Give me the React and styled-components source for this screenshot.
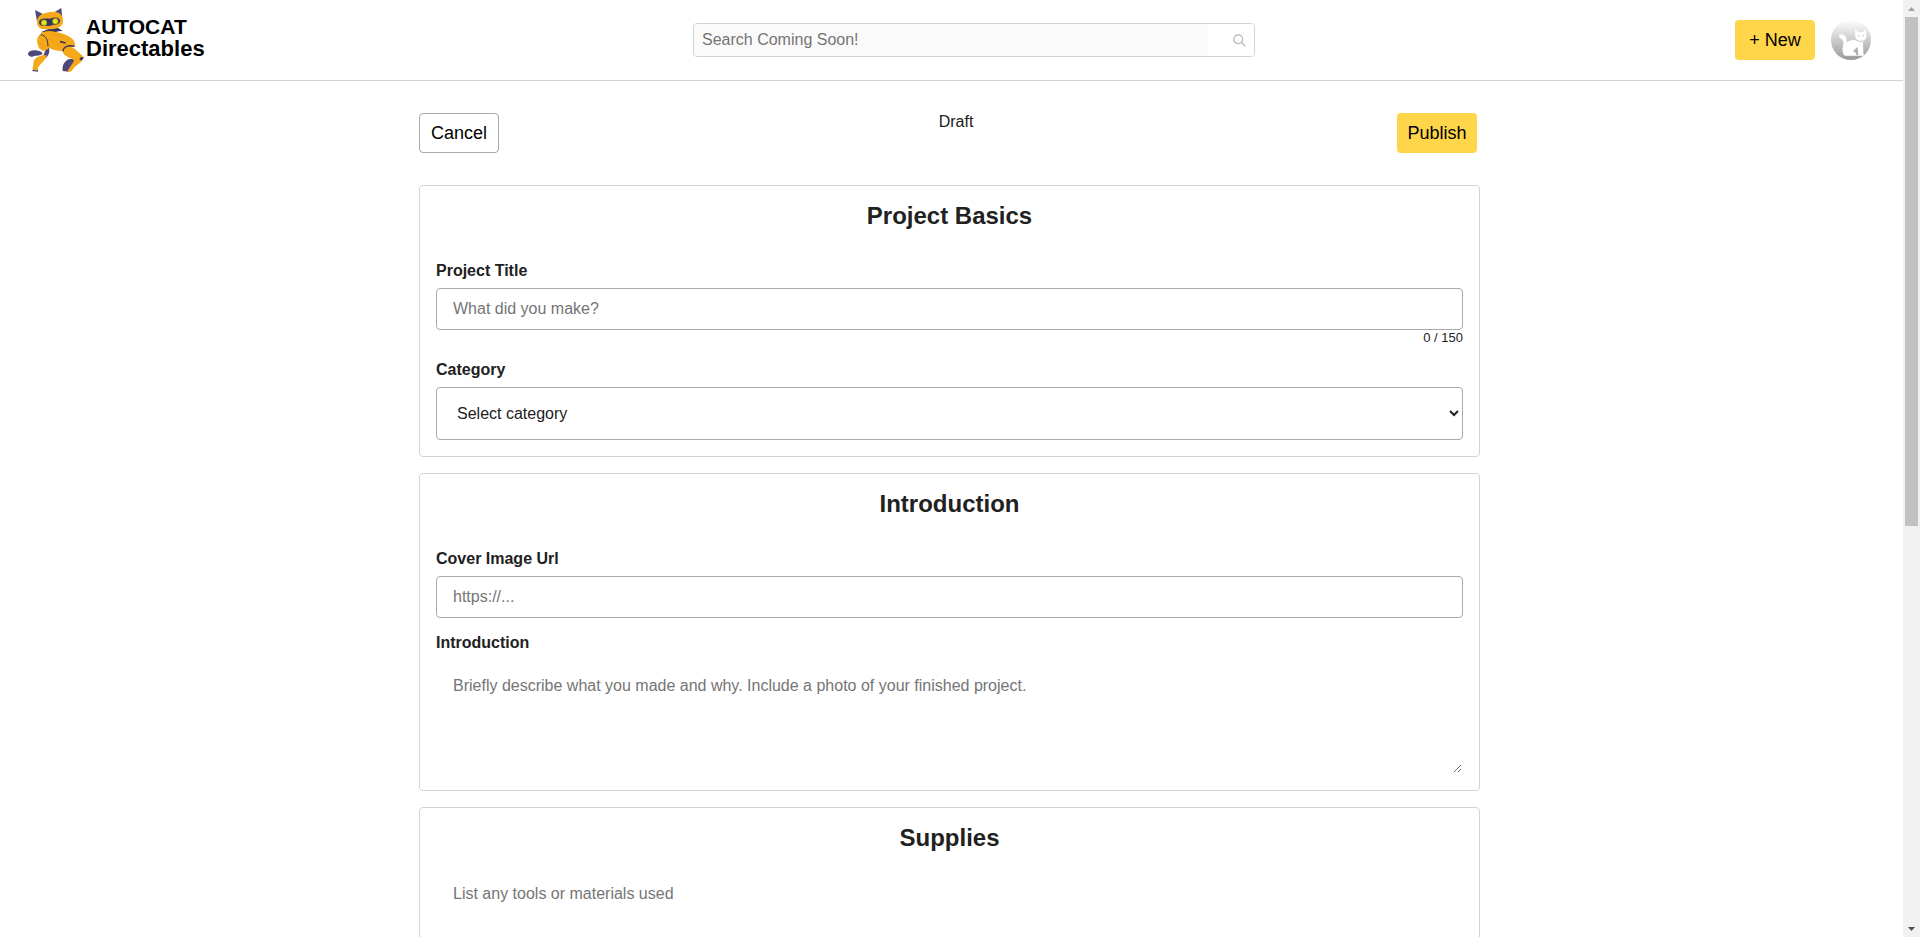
import React, { useState } from "react";
import styled, { createGlobalStyle } from "styled-components";

const GlobalStyle = createGlobalStyle`
  *, *::before, *::after { box-sizing: border-box; }
  body {
    margin: 0;
    background: #fff;
    color: #212121;
    font: 16px/18px "Liberation Sans", Arial, sans-serif;
  }
  button, input, select, textarea { font: inherit; color: inherit; }
`;

const Shell = styled.div`
  display: grid;
  grid-template-columns: minmax(0, 1fr) 17px;
  height: 100vh;
`;

const Page = styled.div`
  overflow-y: auto;
  scrollbar-width: none;
`;

const Header = styled.header`
  display: flex;
  justify-content: space-between;
  align-items: center;
  gap: 24px;
  padding: 6px 32px 6px 27px;
  border-bottom: 1px solid #d3d3d3;
`;

const Logo = styled.a`
  display: flex;
  flex: 0 0 186px;
  color: #000;
  text-decoration: none;
`;

const Wordmark = styled.span`
  display: flex;
  flex-direction: column;
  padding-top: 10px;
  font-weight: bold;
  line-height: 22px;
`;

const WordLine = styled.span`
  font-size: ${(p) => p.$size}px;
`;

const Search = styled.form`
  display: flex;
  flex: 0 1 562px;
  height: 34px;
  border: 1px solid #d3d3d3;
  border-radius: 4px;
  overflow: hidden;
`;

const SearchInput = styled.input`
  flex: 1;
  min-width: 0;
  padding: 0 8px;
  border: 0;
  background: #fafafa;
  &::placeholder { color: #757575; opacity: 1; }
`;

const SearchButton = styled.button`
  display: flex;
  justify-content: flex-end;
  align-items: center;
  width: 46px;
  padding: 0 8px;
  border: 0;
  background: #fff;
`;

const Account = styled.div`
  display: flex;
  gap: 16px;
`;

const Button = styled.button`
  min-width: 80px;
  height: 40px;
  padding: 0 10px;
  border: ${(p) => (p.$outline ? "1px solid #a9a9a9" : "0")};
  border-radius: 4px;
  background: ${(p) => (p.$outline ? "#fff" : "#ffd54a")};
  color: #000;
  font-size: 18px;
`;

const Avatar = styled.button`
  width: 40px;
  height: 40px;
  padding: 0;
  border: 0;
  border-radius: 50%;
  overflow: hidden;
  background: linear-gradient(#fff, #999);
  svg { display: block; }
`;

const Main = styled.main`
  display: flex;
  flex-direction: column;
  gap: 16px;
  max-width: 1065px;
  margin: 0 auto;
  padding: 32px 4px 32px 0;
`;

const Toolbar = styled.div`
  display: flex;
  justify-content: space-between;
  align-items: flex-start;
  padding: 0 3px 16px 0;
`;

const ToolbarStart = styled.div`
  padding-right: 16px;
`;

const Card = styled.section`
  display: flex;
  flex-direction: column;
  padding: 16px;
  border: 1px solid #d3d3d3;
  border-radius: 4px;
`;

const CardTitle = styled.h2`
  margin: 0 0 16px;
  font-size: 24px;
  line-height: 28px;
  text-align: center;
`;

const Label = styled.label`
  margin: 16px 0 8px;
  font-weight: bold;
`;

const TextInput = styled.input`
  width: 100%;
  height: 42px;
  padding: 0 16px;
  border: 1px solid #a9a9a9;
  border-radius: 4px;
  background: #fff;
  &::placeholder { color: #757575; opacity: 1; }
`;

const Counter = styled.span`
  align-self: flex-end;
  font-size: 13px;
  line-height: 15px;
`;

const Select = styled.select`
  width: 100%;
  height: 53px;
  padding: 0 16px;
  border: 1px solid #a9a9a9;
  border-radius: 4px;
  background: #fff;
`;

const TextArea = styled.textarea`
  width: 100%;
  height: 114px;
  padding: 16px;
  border: 1px solid transparent;
  background: transparent;
  resize: both;
  &::placeholder { color: #757575; opacity: 1; }
`;

const Rail = styled.div`
  display: grid;
  grid-template-rows: 17px minmax(0, 1fr) 17px;
  justify-items: center;
  align-items: center;
  background: #f1f1f1;
`;

const Track = styled.div`
  align-self: stretch;
  width: 13px;
`;

const Thumb = styled.div`
  height: 56.4%;
  background: #c1c1c1;
`;

function CatLogo() {
  return (
    <svg width="59" height="68" viewBox="81 18 177 204" aria-hidden="true">
      <g fill="#4f4779">
        <path d="M105 30L130 43L111 64Z" />
        <path d="M184 24L187 58L158 40Z" />
        <path d="M84 160C88 149 106 148 124 155L128 162C116 170 104 165 98 170C90 171 84 168 84 160Z" />
        <path d="M188 213C186 197 192 184 206 178L236 174L222 192L206 215Z" />
        <path d="M96 213L102 206L114 208L114 215Z" />
        <path d="M138 146L147 144C150 156 146 166 138 174L128 172Z" />
      </g>
      <path d="M148 86L174 84L188 93L176 94L156 99L122 97Z" fill="#39345a" />
      <path d="M111 70C109 47 128 38 154 36C180 33 190 48 189 66C188 80 172 86 150 88C128 90 113 86 111 70Z" fill="#f5a91a" />
      <path d="M117 67C118 56 130 54 149 56C164 51 177 50 180 61C181 71 170 76 160 74L149 78L139 77C126 80 117 76 117 67Z" fill="#39345a" />
      <circle cx="132" cy="68" r="9" fill="#bcc416" />
      <circle cx="166" cy="64" r="9" fill="#bcc416" />
      <circle cx="132" cy="68" r="6" fill="#e6e820" />
      <circle cx="166" cy="64" r="6" fill="#e6e820" />
      <path d="M118 106C126 94 146 91 164 95C188 98 210 108 220 120C227 130 228 138 218 142L194 154C176 154 160 150 146 144C132 134 122 122 118 106Z" fill="#f5a91a" />
      <path d="M119 104C108 112 110 132 118 145L129 154L143 148C146 134 140 118 132 109Z" fill="#f5a91a" />
      <path d="M122 104C138 106 144 120 144 140" fill="none" stroke="#39345a" strokeWidth="3" />
      <path d="M140 166C128 164 112 168 104 178C98 188 102 196 97 208L112 212C113 198 128 188 138 174Z" fill="#f5a91a" />
      <path d="M188 156C190 142 206 138 224 146L250 170L244 182L216 176C202 172 192 166 188 156Z" fill="#f5a91a" />
      <path d="M189 154C190 140 206 134 224 139" fill="none" stroke="#39345a" strokeWidth="4" />
      <path d="M214 174L246 180C242 192 222 198 219 208L212 215H202C206 202 218 192 222 182Z" fill="#f5a91a" />
      <path d="M242 172L252 172L245 182L238 178Z" fill="#39345a" />
      <path d="M180 125L197 129" stroke="#39345a" strokeWidth="5" />
      <path d="M152 106C166 103 176 108 188 111M146 118C158 118 160 130 172 136M120 130C126 132 128 140 132 144" fill="none" stroke="#e29510" strokeWidth="2" />
    </svg>
  );
}

function AvatarCat() {
  return (
    <svg width="40" height="40" viewBox="0 0 120 120" aria-hidden="true">
      <path d="M73 28L82 36H96L105 27L106 50C105 60 99 64 96 66L97 100L101 107H41C34 100 33 88 36 78C39 68 38 60 31 56C22 52 23 42 32 43C44 45 50 56 46 68C56 60 68 58 78 62C73 56 72 46 73 28Z" fill="#fff" />
      <path d="M66 94L80 80L82 106H76L74 98Z" fill="#b0b0b0" />
      <path d="M81 46L86 49M99 46L94 49M75 59C84 66 96 66 104 58" stroke="#c0c0c0" strokeWidth="3" fill="none" />
    </svg>
  );
}

function Arrow({ up }) {
  return (
    <svg width="7" height="4" viewBox="0 0 7 4" aria-hidden="true">
      <path d={up ? "M0 4L3.5 0L7 4Z" : "M0 0L3.5 4L7 0Z"} fill={up ? "#a3a3a3" : "#505050"} />
    </svg>
  );
}

export default function App() {
  const [title, setTitle] = useState("");
  return (
    <>
      <GlobalStyle />
      <Shell>
        <Page>
          <Header>
            <Logo href="#">
              <CatLogo />
              <Wordmark>
                <WordLine $size={21}>AUTOCAT</WordLine>
                <WordLine $size={22}>Directables</WordLine>
              </Wordmark>
            </Logo>
            <Search role="search">
              <SearchInput type="text" aria-label="Search" placeholder="Search Coming Soon!" />
              <SearchButton type="button" aria-label="Search">
                <svg width="13" height="13" viewBox="0 0 13 13" fill="none" stroke="#b5b5b5" strokeWidth="1.3" aria-hidden="true">
                  <circle cx="5.2" cy="5.2" r="4.4" />
                  <path d="M8.3 8.3L12.4 12.4" />
                </svg>
              </SearchButton>
            </Search>
            <Account>
              <Button type="button">+ New</Button>
              <Avatar type="button" aria-label="Account">
                <AvatarCat />
              </Avatar>
            </Account>
          </Header>
          <Main>
            <Toolbar>
              <ToolbarStart>
                <Button type="button" $outline>Cancel</Button>
              </ToolbarStart>
              <span>Draft</span>
              <Button type="button">Publish</Button>
            </Toolbar>
            <Card>
              <CardTitle>Project Basics</CardTitle>
              <Label htmlFor="title">Project Title</Label>
              <TextInput
                id="title"
                maxLength={150}
                placeholder="What did you make?"
                value={title}
                onChange={(e) => setTitle(e.target.value)}
              />
              <Counter>{title.length} / 150</Counter>
              <Label htmlFor="category">Category</Label>
              <Select id="category">
                <option>Select category</option>
              </Select>
            </Card>
            <Card>
              <CardTitle>Introduction</CardTitle>
              <Label htmlFor="cover">Cover Image Url</Label>
              <TextInput id="cover" placeholder="https://..." />
              <Label htmlFor="intro">Introduction</Label>
              <TextArea
                id="intro"
                placeholder="Briefly describe what you made and why. Include a photo of your finished project."
              />
            </Card>
            <Card>
              <CardTitle id="supplies">Supplies</CardTitle>
              <TextArea aria-labelledby="supplies" placeholder="List any tools or materials used" />
            </Card>
          </Main>
        </Page>
        <Rail aria-hidden="true">
          <Arrow up />
          <Track>
            <Thumb />
          </Track>
          <Arrow />
        </Rail>
      </Shell>
    </>
  );
}
